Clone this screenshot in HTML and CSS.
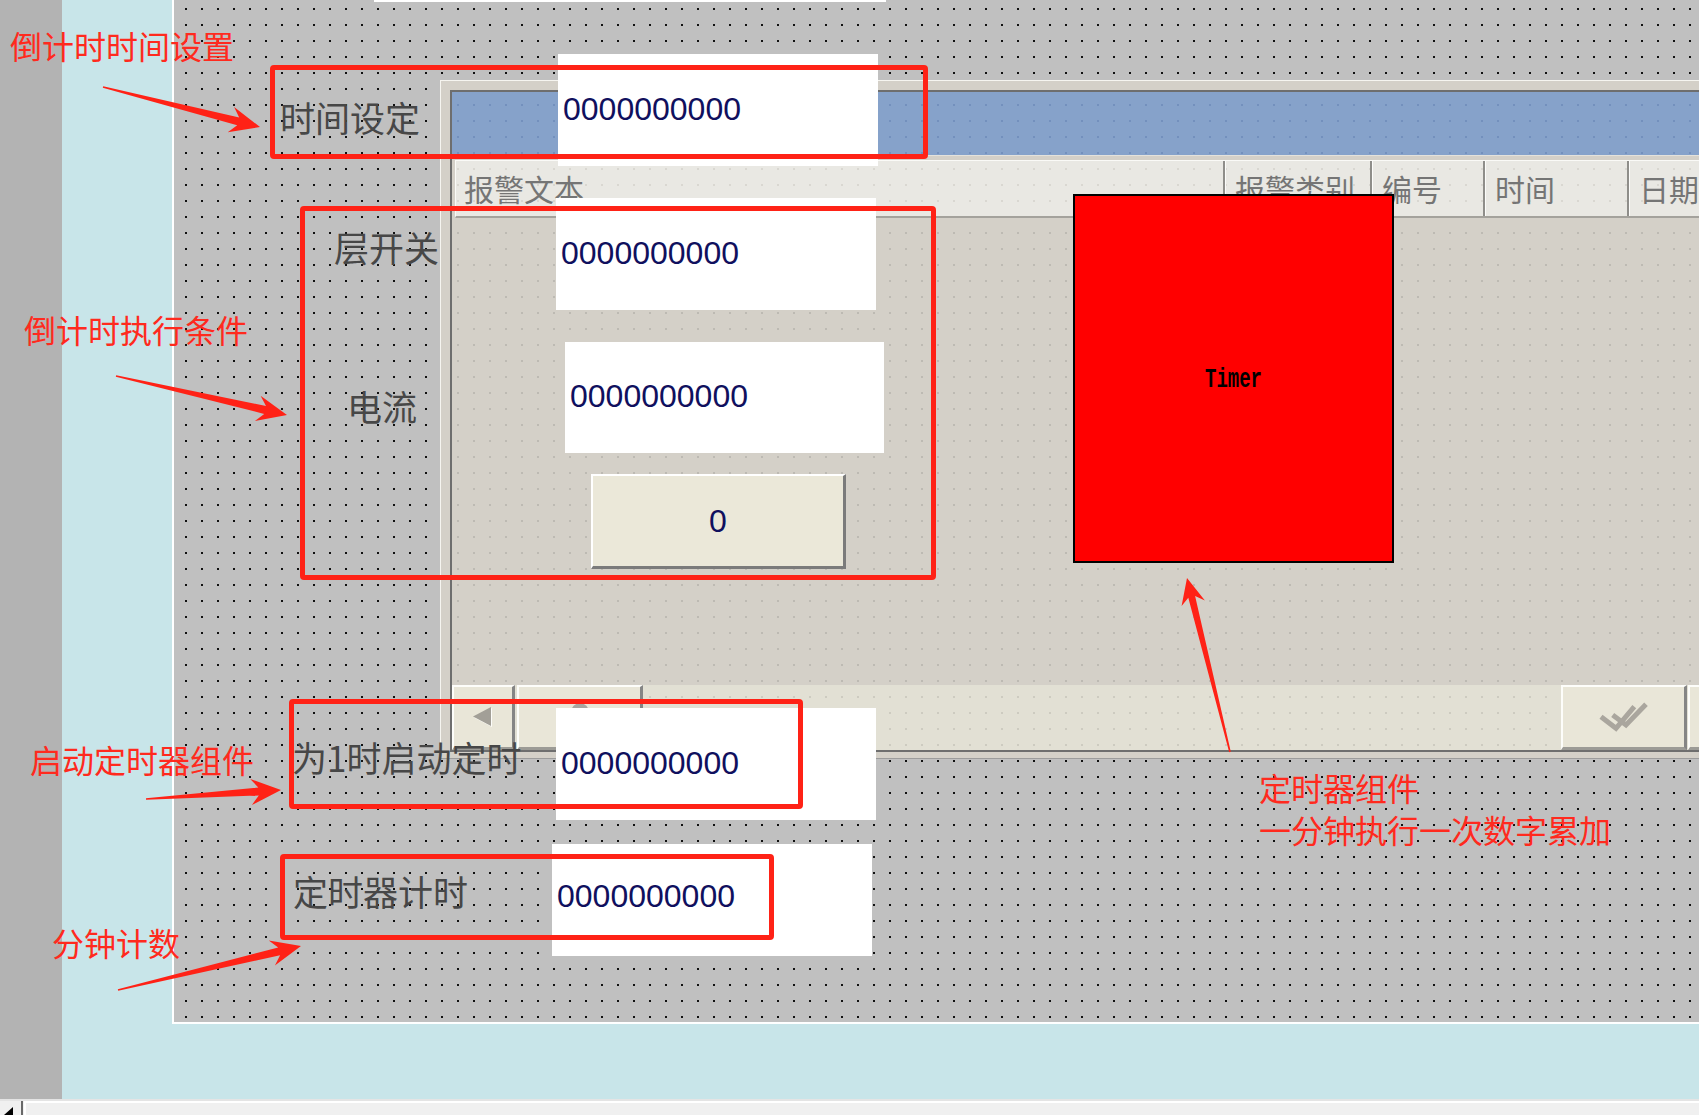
FILE: index.html
```html
<!DOCTYPE html>
<html lang="zh-CN">
<head>
    <meta charset="UTF-8">
    <meta name="viewport" content="width=device-width, initial-scale=1.0">
    <title>定时器组件</title>
    <link rel="stylesheet" href="styles.css">
</head>
<body>
    <div class="screen">
        <div class="workspace">
            <div class="ruler"></div>
            <div class="stage">
                <div class="form dots">
                    <div class="field field-top"></div>

                    <div class="alarm">
                        <div class="alarm-frame">
                            <div class="alarm-title dots"></div>
                            <div class="alarm-head dots">
                                <div class="col col-text">报警文本</div>
                                <div class="col col-type">报警类别</div>
                                <div class="col col-no">编号</div>
                                <div class="col col-time">时间</div>
                                <div class="col col-date">日期</div>
                            </div>
                            <div class="alarm-body dots"></div>
                            <div class="alarm-bar dots">
                                <div class="bar-btn bar-left">
                                    <svg width="20" height="21" viewBox="0 0 20 21">
                                        <polygon points="19,1 19,20 1,10.5" fill="#fdfdfa"/>
                                        <polygon points="18,0 18,19 0,9.5" fill="#a29f97"/>
                                    </svg>
                                </div>
                                <div class="bar-btn bar-thumb"><span class="grip"></span></div>
                                <div class="bar-btn bar-ack">
                                    <svg width="50" height="30" viewBox="0 0 50 30">
                                        <polyline points="2,14.7 17,26.3 35.3,4.7" fill="none" stroke="#aaa69e" stroke-width="5"/>
                                        <polyline points="13.7,13 27,23 47,2.3" fill="none" stroke="#aaa69e" stroke-width="5"/>
                                    </svg>
                                </div>
                                <div class="bar-btn bar-next"></div>
                            </div>
                        </div>
                    </div>

                    <div class="label label-set">时间设定</div>
                    <div class="field field-set">0000000000</div>

                    <div class="label label-floor">层开关</div>
                    <div class="field field-floor">0000000000</div>

                    <div class="label label-current">电流</div>
                    <div class="field field-current">0000000000</div>

                    <div class="key">0</div>

                    <div class="timer"><span>Timer</span></div>

                    <div class="label label-start">为1时启动定时</div>
                    <div class="field field-start">0000000000</div>

                    <div class="label label-count">定时器计时</div>
                    <div class="field field-count">0000000000</div>
                </div>
            </div>
        </div>

        <div class="statusbar">
            <div class="status-grip">
                <svg width="9" height="8" viewBox="0 0 9 8"><polygon points="9,0 9,8 0,8" fill="#000"/></svg>
            </div>
            <div class="status-main"></div>
        </div>

        <div class="notes">
            <div class="mark mark-set"></div>
            <div class="mark mark-cond"></div>
            <div class="mark mark-start"></div>
            <div class="mark mark-count"></div>

            <div class="note note-set">倒计时时间设置</div>
            <div class="note note-cond">倒计时执行条件</div>
            <div class="note note-start">启动定时器组件</div>
            <div class="note note-count">分钟计数</div>
            <div class="note note-timer">定时器组件<br>一分钟执行一次数字累加</div>

            <svg class="arrows" width="1699" height="1115" viewBox="0 0 1699 1115">
                <polygon points="102.8,87.8 237.2,125.3 227.7,132.2 260,127 234.1,107 239.2,117.6 103.2,86.2"/>
                <polygon points="115.8,376.8 264.2,413.9 254.9,421 287,415 260.6,395.7 266,406.1 116.2,375.2"/>
                <polygon points="146,799.8 258.8,795.5 251.9,805 281,790 250.2,779 258.3,787.5 146,798.2"/>
                <polygon points="118.2,990.8 280.1,955.2 274.9,965.6 301,946 268.8,940.4 278.2,947.4 117.8,989.2"/>
                <polygon points="1230.8,751.8 1195.1,596.1 1204.9,600.4 1187,578 1181.6,606.1 1188.3,597.8 1229.2,752.2"/>
            </svg>
        </div>
    </div>
</body>
</html>
```

FILE: styles.css
```css
body {
    margin: 0;
    background: #c8e5e9;
    font-family: "Noto Sans CJK SC", sans-serif;
    overflow: hidden;
}
.screen {
    position: relative;
    width: 1699px;
    height: 1115px;
    display: flex;
    flex-direction: column;
    overflow: hidden;
}
.workspace {
    height: 1099px;
    display: grid;
    grid-template-columns: 62px 1fr;
}
.ruler {
    background: #b3b3b3;
}
.stage {
    background: #c8e5e9;
    padding-left: 110px;
}

/* design grid, dots line up across every control */
.dots {
    background-image: conic-gradient(from 270deg at 2px 2px, var(--dot) 25%, transparent 0);
    background-size: 16px 16px;
    background-position: 9px 8px;
    background-attachment: fixed;
}
.form {
    --dot: #111;
    position: relative;
    height: 1024px;
    box-sizing: border-box;
    border-left: 2px solid #fff;
    border-bottom: 2px solid #fff;
    background-color: #c0c0c0;
    overflow: hidden;
}

/* alarm window */
.alarm {
    position: absolute;
    left: 266px;
    top: 80px;
    width: 1400px;
    box-sizing: border-box;
    padding: 9px 0 6px 9px;
    border-top: 1px solid #f6f5f0;
    border-left: 1px solid #f6f5f0;
    border-bottom: 1px solid #9c9c9c;
    background: #d4d0c8;
}
.alarm-frame {
    height: 662px;
    box-sizing: border-box;
    border-top: 2px solid #6e6e6e;
    border-left: 2px solid #6e6e6e;
    border-bottom: 2px solid #6e6e6e;
    display: flex;
    flex-direction: column;
}
.alarm-title {
    --dot: #7390bd;
    height: 63px;
    flex: none;
    background-color: #86a2ca;
    border-bottom: 1px solid #e4e2dc;
    margin-bottom: 4px;
}
.alarm-head {
    --dot: #d9d7d1;
    height: 58px;
    flex: none;
    box-sizing: border-box;
    margin-left: 3px;
    display: flex;
    background-color: #e9e8e3;
    border-top: 1px solid #fafaf7;
    border-left: 1px solid #fafaf7;
    border-bottom: 2px solid #a4a29c;
    overflow: hidden;
}
.col {
    flex: none;
    box-sizing: border-box;
    padding: 12px 0 0 10px;
    font-size: 30px;
    line-height: 30px;
    color: #757575;
    border-right: 2px solid #8f8e8a;
    box-shadow: inset 1px 0 #fcfcfa;
    white-space: nowrap;
    overflow: hidden;
}
.col-text { width: 769px; padding-left: 8px; box-shadow: none; }
.col-type { width: 147px; }
.col-no { width: 113px; }
.col-time { width: 144px; }
.col-date { flex: 1; border-right: 0; }
.alarm-body {
    --dot: #bdbab3;
    flex: 1;
    background-color: #d4d0c8;
}
.alarm-bar {
    --dot: #cdcbc0;
    height: 65px;
    flex: none;
    display: flex;
    background-color: #e2e0d4;
}
.bar-btn {
    position: relative;
    flex: none;
    height: 65px;
    box-sizing: border-box;
    background: #e9e6d8;
    border-top: 2px solid #fdfdfa;
    border-left: 2px solid #fdfdfa;
    border-right: 3px solid #858585;
    border-bottom: 3px solid #9c9b96;
    display: flex;
    align-items: center;
    justify-content: center;
}
.bar-left { width: 63px; }
.bar-thumb { width: 126px; margin-left: 2px; }
.bar-ack { width: 126px; margin-left: 918px; }
.bar-next { width: 126px; margin-left: 1px; }
.grip {
    position: absolute;
    top: 16px;
    left: 50%;
    width: 18px;
    height: 18px;
    margin-left: -9px;
    border-radius: 50%;
    background: #a8a59f;
}

/* controls on the form */
.field {
    position: absolute;
    width: 320px;
    height: 112px;
    box-sizing: border-box;
    padding: 0 0 3px 5px;
    background: #fff;
    display: flex;
    align-items: center;
    font-family: "Liberation Sans", Arial, sans-serif;
    font-size: 32px;
    line-height: 32px;
    color: #10105e;
}
.field-top { left: 200px; top: -100px; width: 512px; height: 102px; }
.field-set { left: 384px; top: 54px; }
.field-floor { left: 382px; top: 198px; }
.field-current { left: 391px; top: 342px; width: 319px; height: 111px; }
.field-start { left: 382px; top: 708px; }
.field-count { left: 378px; top: 844px; padding-bottom: 9px; }

.label {
    position: absolute;
    font-size: 35px;
    line-height: 35px;
    color: #474747;
    white-space: nowrap;
}
.label-set { left: 106px; top: 99px; }
.label-floor { left: 160px; top: 229px; }
.label-current { left: 173px; top: 388px; }
.label-start { left: 118px; top: 739px; }
.label-count { left: 119px; top: 873px; }

.key {
    position: absolute;
    left: 417px;
    top: 474px;
    width: 255px;
    height: 95px;
    box-sizing: border-box;
    background: #ebe8d9;
    border-top: 2px solid #fff;
    border-left: 2px solid #fff;
    border-right: 3px solid #7b7b7b;
    border-bottom: 3px solid #7b7b7b;
    display: flex;
    align-items: center;
    justify-content: center;
    font-family: "Liberation Sans", Arial, sans-serif;
    font-size: 32px;
    color: #10105e;
}
.timer {
    position: absolute;
    left: 899px;
    top: 194px;
    width: 321px;
    height: 369px;
    box-sizing: border-box;
    border: 2px solid #000;
    background: #f00;
    display: flex;
    align-items: center;
    justify-content: center;
}
.timer span {
    font-family: "Liberation Mono", monospace;
    font-weight: bold;
    font-size: 19px;
    color: #000;
    transform: scaleY(1.5);
}

/* status bar */
.statusbar {
    height: 16px;
    box-sizing: border-box;
    border-top: 2px solid #e4e4e4;
    background: #f0f0f0;
    display: flex;
}
.status-grip {
    width: 23px;
    border-right: 2px solid #696969;
    display: flex;
    align-items: flex-end;
    padding-left: 4px;
    box-sizing: border-box;
}
.status-grip svg { display: block; }
.status-main {
    flex: 1;
    margin-left: 1px;
    border-left: 2px solid #fff;
    border-top: 2px solid #fff;
}

/* red notes drawn over the screenshot */
.notes {
    position: absolute;
    inset: 0;
    pointer-events: none;
}
.mark {
    position: absolute;
    box-sizing: border-box;
    border: 5px solid #ff2216;
    border-radius: 4px;
}
.mark-set { left: 270px; top: 65px; width: 658px; height: 94px; }
.mark-cond { left: 300px; top: 206px; width: 636px; height: 374px; }
.mark-start { left: 289px; top: 699px; width: 514px; height: 110px; }
.mark-count { left: 280px; top: 854px; width: 494px; height: 86px; }

.note {
    position: absolute;
    font-size: 32px;
    line-height: 32px;
    color: #ff2a1e;
    white-space: nowrap;
}
.note-set { left: 10px; top: 29px; }
.note-cond { left: 24px; top: 313px; }
.note-start { left: 30px; top: 743px; }
.note-count { left: 52px; top: 926px; }
.note-timer { left: 1259px; top: 766px; line-height: 42px; }

.arrows {
    position: absolute;
    left: 0;
    top: 0;
    fill: #ff2216;
}
```
